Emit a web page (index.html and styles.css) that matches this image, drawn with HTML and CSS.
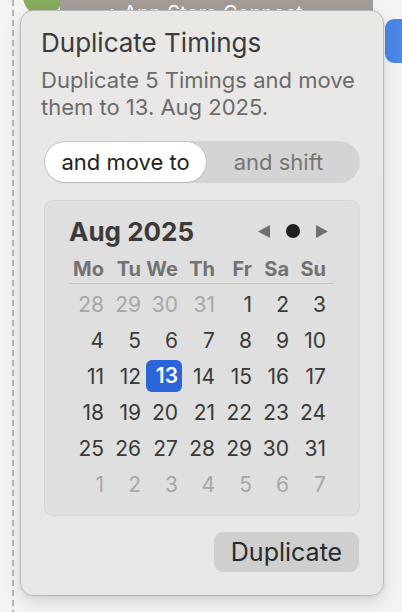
FILE: index.html
```html
<!DOCTYPE html>
<html lang="en">
<head>
<meta charset="utf-8">
<title>Duplicate Timings</title>
<link rel="stylesheet" href="styles.css">
</head>
<body>
  <div class="stage">
    <div class="rail"></div>
    <div class="lane">
      <div class="node"></div>
      <div class="event">› App Store Connect</div>
    </div>
    <div class="side"><div class="chip"></div></div>
  </div>

  <div class="popover">
    <h1 class="title">Duplicate Timings</h1>
    <p class="subtitle">Duplicate 5 Timings and move<br>them to 13. Aug 2025.</p>

    <div class="segmented">
      <div class="seg seg-on">and move to</div>
      <div class="seg seg-off">and shift</div>
    </div>

    <div class="calendar">
      <div class="cal-head">
        <span class="month">Aug 2025</span>
        <div class="nav">
          <svg class="tri" width="12" height="13" viewBox="0 0 12 13"><polygon points="12,0 12,13 0,6.5" fill="#707070"/></svg>
          <span class="today-dot"></span>
          <svg class="tri" width="12" height="13" viewBox="0 0 12 13"><polygon points="0,0 0,13 12,6.5" fill="#707070"/></svg>
        </div>
      </div>
      <div class="weekdays">
        <span>Mo</span><span>Tu</span><span>We</span><span>Th</span><span>Fr</span><span>Sa</span><span>Su</span>
      </div>
      <div class="days">
        <span class="day out">28</span><span class="day out">29</span><span class="day out">30</span><span class="day out">31</span><span class="day">1</span><span class="day">2</span><span class="day">3</span>
        <span class="day">4</span><span class="day">5</span><span class="day">6</span><span class="day">7</span><span class="day">8</span><span class="day">9</span><span class="day">10</span>
        <span class="day">11</span><span class="day">12</span><span class="day sel"><b>13</b></span><span class="day">14</span><span class="day">15</span><span class="day">16</span><span class="day">17</span>
        <span class="day">18</span><span class="day">19</span><span class="day">20</span><span class="day">21</span><span class="day">22</span><span class="day">23</span><span class="day">24</span>
        <span class="day">25</span><span class="day">26</span><span class="day">27</span><span class="day">28</span><span class="day">29</span><span class="day">30</span><span class="day">31</span>
        <span class="day out">1</span><span class="day out">2</span><span class="day out">3</span><span class="day out">4</span><span class="day out">5</span><span class="day out">6</span><span class="day out">7</span>
      </div>
    </div>

    <div class="actions">
      <button class="btn">Duplicate</button>
    </div>
  </div>
</body>
</html>
```

FILE: styles.css
```css
* { box-sizing: border-box; }

html, body {
  margin: 0;
  padding: 0;
}

body {
  width: 402px;
  height: 612px;
  overflow: hidden;
  background: #f4f4f4;
  font-family: Inter, "Noto Sans", "Liberation Sans", sans-serif;
  position: relative;
}

/* background timeline */
.stage {
  display: flex;
  height: 612px;
}

.rail {
  width: 2px;
  margin-left: 12px;
  flex: none;
  background: repeating-linear-gradient(to bottom, #b6b6b6 0 6px, transparent 6px 10px);
}

.lane {
  flex: 1;
  display: flex;
  align-items: flex-start;
  padding-left: 9px;
  margin-right: 12px;
}

.node {
  flex: none;
  width: 40px;
  height: 40px;
  border-radius: 50%;
  background: #87ad5e;
  margin-top: -24px;
}

.event {
  flex: 1;
  height: 30px;
  margin-top: -2px;
  margin-left: -3px;
  padding-left: 50px;
  background: #a39d99;
  border-radius: 0 0 8px 8px;
  color: #ffffff;
  font-size: 20px;
  line-height: 30px;
  white-space: nowrap;
  overflow: hidden;
}

.side {
  width: 17px;
  flex: none;
  padding-top: 19px;
}

.chip {
  height: 44px;
  background: #4b88e8;
  border-radius: 9px 0 0 9px;
}

/* popover */
.popover {
  position: absolute;
  left: 20px;
  top: 10px;
  width: 364px;
  height: 586px;
  border: 1px solid #b9b9b9;
  border-radius: 13px;
  background: linear-gradient(to bottom, #eae8e5 0%, #e7e7e7 40%, #e7e7e7 100%);
  box-shadow: 0 6px 18px rgba(0, 0, 0, 0.13), 0 1px 3px rgba(0, 0, 0, 0.08);
  padding: 16px 23px 0 23px;
  display: flex;
  flex-direction: column;
}

.title {
  margin: 0 0 0 -3px;
  font-size: 26px;
  line-height: 32px;
  font-weight: 400;
  color: #3b3b3b;
}

.subtitle {
  margin: 8px 0 0 -3px;
  font-size: 22px;
  line-height: 27px;
  color: #6b6b6b;
  white-space: nowrap;
}

.segmented {
  margin-top: 20px;
  height: 42px;
  border-radius: 21px;
  background: #d4d4d4;
  display: grid;
  grid-template-columns: 161px 1fr;
  padding: 1px;
}

.seg {
  display: flex;
  align-items: center;
  justify-content: center;
  font-size: 22px;
  color: #767676;
  border-radius: 20px;
}

.seg-off {
  padding-right: 8px;
}

.seg-on {
  background: #ffffff;
  color: #222222;
  box-shadow: 0 0 0 0.5px rgba(0, 0, 0, 0.12), 0 1px 2px rgba(0, 0, 0, 0.08);
}

.calendar {
  margin-top: 17px;
  height: 316px;
  background: #dfdfdf;
  border: 1px solid #d7d7d7;
  border-radius: 9px;
  padding: 15px 29px 12px 26px;
}

.cal-head {
  display: flex;
  align-items: center;
  justify-content: space-between;
  height: 30px;
  margin-bottom: 10px;
}

.month {
  margin-left: -2px;
  font-size: 26px;
  font-weight: 700;
  color: #3b3b3b;
}

.nav {
  display: flex;
  align-items: center;
  gap: 16px;
  margin-right: 2px;
}

.tri {
  display: block;
}

.today-dot {
  width: 14px;
  height: 14px;
  border-radius: 50%;
  background: #1f1f1f;
}

.weekdays {
  display: grid;
  grid-template-columns: repeat(7, 37px);
  height: 28px;
  line-height: 26px;
  font-size: 20px;
  font-weight: 700;
  color: #727272;
  margin: 0 -4px 0 -2px;
  padding: 0 4px 1px 2px;
  border-bottom: 1px solid #c7c7c7;
}

.weekdays span {
  text-align: right;
  padding-right: 4px;
}

.days {
  margin-top: 3px;
  display: grid;
  grid-template-columns: repeat(7, 37px);
  grid-auto-rows: 36px;
}

.day {
  font-size: 21px;
  line-height: 36px;
  text-align: right;
  padding-right: 4px;
  color: #3a3a3a;
}

.day.out {
  color: #a7a7a7;
}

.day.sel {
  padding: 1px 0 3px 1px;
}

.day.sel b {
  display: block;
  height: 32px;
  line-height: 32px;
  padding-right: 4px;
  border-radius: 6px;
  background: #2b63d8;
  color: #ffffff;
  font-weight: 600;
}

.actions {
  margin-top: 16px;
  display: flex;
  justify-content: flex-end;
  padding-right: 1px;
}

.btn {
  width: 145px;
  height: 40px;
  border: none;
  border-radius: 9px;
  background: #cfcfcf;
  color: #2a2a2a;
  font-family: inherit;
  font-size: 25px;
  padding: 0;
}
```
